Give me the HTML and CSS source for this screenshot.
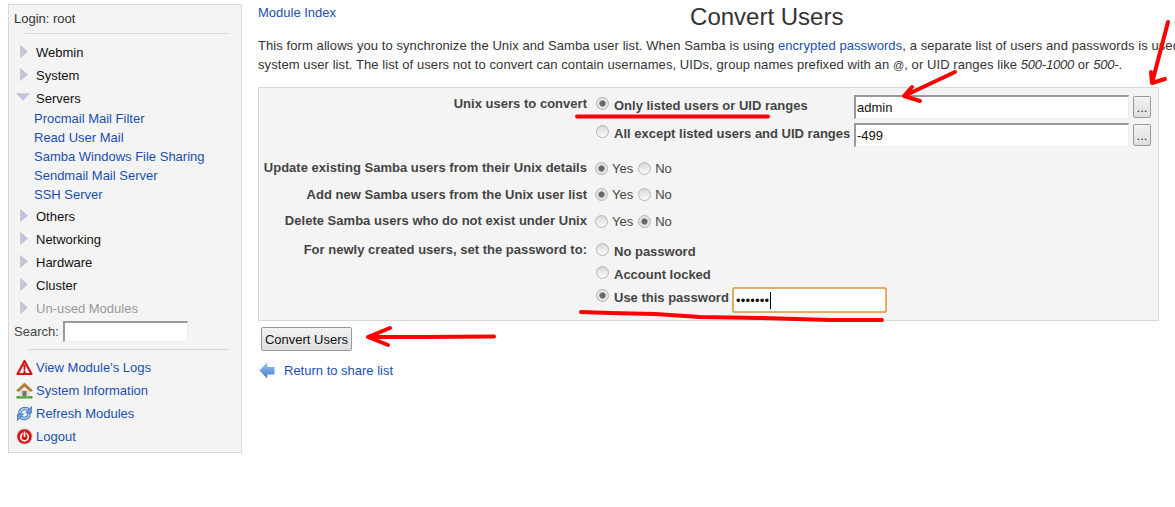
FILE: index.html
```html
<!DOCTYPE html>
<html lang="en">

<head>
    <meta charset="UTF-8">
    <title>Convert Users</title>
    <link rel="stylesheet" href="styles.css">
</head>

<body>
    <div class="page">
        <div class="side">
            <div class="login">Login: root</div>
            <hr class="rule-top">
            <ul class="cats">
                <li class="cat"><svg class="tri" viewBox="0 0 8 13"><path d="M0.5 0.5L7.5 6.5L0.5 12.5Z"/></svg>Webmin</li>
                <li class="cat"><svg class="tri" viewBox="0 0 8 13"><path d="M0.5 0.5L7.5 6.5L0.5 12.5Z"/></svg>System</li>
                <li class="cat"><svg class="tri-down" viewBox="0 0 14 8"><path d="M0.5 0.5H13.5L7 7.5Z"/></svg>Servers</li>
                <li>
                    <ul class="subs">
                        <li class="sub"><a href="#">Procmail Mail Filter</a></li>
                        <li class="sub"><a href="#">Read User Mail</a></li>
                        <li class="sub"><a href="#">Samba Windows File Sharing</a></li>
                        <li class="sub"><a href="#">Sendmail Mail Server</a></li>
                        <li class="sub"><a href="#">SSH Server</a></li>
                    </ul>
                </li>
                <li class="cat"><svg class="tri" viewBox="0 0 8 13"><path d="M0.5 0.5L7.5 6.5L0.5 12.5Z"/></svg>Others</li>
                <li class="cat"><svg class="tri" viewBox="0 0 8 13"><path d="M0.5 0.5L7.5 6.5L0.5 12.5Z"/></svg>Networking</li>
                <li class="cat"><svg class="tri" viewBox="0 0 8 13"><path d="M0.5 0.5L7.5 6.5L0.5 12.5Z"/></svg>Hardware</li>
                <li class="cat"><svg class="tri" viewBox="0 0 8 13"><path d="M0.5 0.5L7.5 6.5L0.5 12.5Z"/></svg>Cluster</li>
                <li class="cat unused"><svg class="tri" viewBox="0 0 8 13"><path d="M0.5 0.5L7.5 6.5L0.5 12.5Z"/></svg>Un-used Modules</li>
            </ul>
            <div class="search">Search: <input class="search-box" type="text"></div>
            <hr class="rule-bottom">
            <ul class="tools">
                <li>
                    <svg class="ico" viewBox="0 0 17 17"><path d="M8.500 2L15.500 15H1.500Z" fill="#f6f0f0" stroke="#d01515" stroke-width="2.200" stroke-linejoin="round"/><path d="M7.300 5.500H9.700L9.100 11.500H7.900Z" fill="#c01212"/><rect x="7.500" y="12" width="2" height="2" fill="#c01212"/></svg>
                    <a href="#">View Module's Logs</a>
                </li>
                <li>
                    <svg class="ico" viewBox="0 0 17 17"><path d="M0.500 14H16.500V16.500H0.500Z" fill="#4f9e3c"/><path d="M3.500 8H13.500V14.500H3.500Z" fill="#e8dcc4"/><path d="M0.500 8.500L8.500 1L16.500 8.500L14.500 9.500L8.500 4.500L2.500 9.500Z" fill="#bd7c34" stroke="#94601f" stroke-width="0.500"/><path d="M6.500 9H10.500V14.500H6.500Z" fill="#737373"/></svg>
                    <a href="#">System Information</a>
                </li>
                <li>
                    <svg class="ico" viewBox="0 0 17 17">
                        <g fill="none" stroke-linecap="round">
                            <path d="M4 7.500C4.500 3.500 10 2 13.500 5.500" stroke="#3f78bd" stroke-width="3.400"/>
                            <path d="M4 7.500C4.500 3.500 10 2 13.500 5.500" stroke="#b4cfec" stroke-width="1.600"/>
                            <path d="M13 9.500C12.500 13.500 7 15 3.500 11.500" stroke="#3f78bd" stroke-width="3.400"/>
                            <path d="M13 9.500C12.500 13.500 7 15 3.500 11.500" stroke="#b4cfec" stroke-width="1.600"/>
                        </g>
                        <path d="M15.500 1.500V8H9.500Z" fill="#6b9bd4" stroke="#3f78bd" stroke-width="0.800"/>
                        <path d="M1.500 15.500V9H7.500Z" fill="#6b9bd4" stroke="#3f78bd" stroke-width="0.800"/>
                    </svg>
                    <a href="#">Refresh Modules</a>
                </li>
                <li>
                    <svg class="ico" viewBox="0 0 17 17"><circle cx="8.500" cy="8.500" r="8" fill="#d9a0a0"/><circle cx="8.500" cy="8.500" r="7" fill="#d01010"/><circle cx="8.500" cy="9" r="3.800" fill="none" stroke="#fbeeee" stroke-width="1.800"/><rect x="6.800" y="3" width="3.400" height="6" fill="#d01010"/><rect x="7.600" y="3.500" width="1.800" height="5.500" fill="#fbeeee"/></svg>
                    <a href="#">Logout</a>
                </li>
            </ul>
        </div>

        <div class="main">
            <div class="head">
                <a class="index-link" href="#">Module Index</a>
                <h1 class="title">Convert Users</h1>
            </div>
            <p class="intro">This form allows you to synchronize the Unix and Samba user list. When Samba is using <a href="#">encrypted passwords</a>, a separate list of users and passwords is used<br>system user list. The list of users not to convert can contain usernames, UIDs, group names prefixed with an <span class="at">@</span>, or UID ranges like <i>500-1000</i> or <i>500-</i>.</p>

            <form class="box">
                <div class="row row-users">
                    <div class="lab">Unix users to convert</div>
                    <div class="val">
                        <div class="line">
                            <input class="rad" type="radio" name="m" checked>
                            <b class="opt opt-list">Only listed users or UID ranges</b>
                            <input class="txt" type="text" value="admin">
                            <button class="dots" type="button">...</button>
                        </div>
                        <div class="line">
                            <input class="rad" type="radio" name="m">
                            <b class="opt opt-list">All except listed users and UID ranges</b>
                            <input class="txt" type="text" value="-499">
                            <button class="dots" type="button">...</button>
                        </div>
                    </div>
                </div>
                <div class="row row-yn">
                    <div class="lab">Update existing Samba users from their Unix details</div>
                    <div class="val yn">
                        <input class="rad" type="radio" name="u" checked><span>Yes</span>
                        <input class="rad" type="radio" name="u"><span>No</span>
                    </div>
                </div>
                <div class="row row-yn">
                    <div class="lab">Add new Samba users from the Unix user list</div>
                    <div class="val yn">
                        <input class="rad" type="radio" name="a" checked><span>Yes</span>
                        <input class="rad" type="radio" name="a"><span>No</span>
                    </div>
                </div>
                <div class="row row-yn">
                    <div class="lab">Delete Samba users who do not exist under Unix</div>
                    <div class="val yn">
                        <input class="rad" type="radio" name="d"><span>Yes</span>
                        <input class="rad" type="radio" name="d" checked><span>No</span>
                    </div>
                </div>
                <div class="row row-pass">
                    <div class="lab">For newly created users, set the password to:</div>
                    <div class="val">
                        <div class="pline"><input class="rad" type="radio" name="p"><b class="opt">No password</b></div>
                        <div class="pline"><input class="rad" type="radio" name="p"><b class="opt">Account locked</b></div>
                        <div class="pline">
                            <input class="rad" type="radio" name="p" checked><b class="opt">Use this password</b>
                            <div class="pass"><span class="pass-dots">•••••••</span><span class="caret"></span></div>
                        </div>
                    </div>
                </div>
            </form>

            <button class="submit" type="button">Convert Users</button>

            <div class="back">
                <svg class="back-ico" viewBox="0 0 16 17"><defs><linearGradient id="bk" x1="0" y1="0" x2="0" y2="1"><stop offset="0" stop-color="#a4c4ee"/><stop offset="1" stop-color="#3a78d2"/></linearGradient></defs><path d="M0.500 8.500L8 0.500L8.500 5H15.500V12.500H8.500L8 16.500Z" fill="url(#bk)"/></svg>
                <a href="#">Return to share list</a>
            </div>
        </div>
    </div>

    <!-- red marks drawn over the screenshot -->
    <svg class="marks" viewBox="0 0 1175 507">
        <g fill="none" stroke="#ff0000" stroke-width="4" stroke-linecap="round" stroke-linejoin="round">
            <path d="M577 116.500H768"/>
            <path d="M955 72L904 96M912 87L904 96L920 101"/>
            <path d="M1168 22L1152 83M1151 72L1152 83L1165 79"/>
            <path d="M581 312L610 313L655 314L700 317L760 318L830 320L882 320"/>
            <path d="M494 336.500L420 337L368 337M390 328L368 337L388 345"/>
        </g>
    </svg>
</body>

</html>
```

FILE: styles.css
```css
* {
    box-sizing: border-box;
}

html,
body {
    margin: 0;
    padding: 0;
    height: 507px;
    overflow: hidden;
    background: #fff;
}

body {
    font-family: "Liberation Sans", Arial, sans-serif;
    font-size: 13px;
    color: #333;
    position: relative;
}

a {
    color: #1a4fb0;
    text-decoration: none;
}

ul {
    list-style: none;
    margin: 0;
    padding: 0;
}

.page {
    display: flex;
    align-items: flex-start;
    padding: 4px 0 0 8px;
    width: 1400px;
}

/* left menu */

.side {
    width: 234px;
    height: 449px;
    flex: none;
    background: #f4f4f4;
    border: 1px solid #d8d8d8;
    padding: 6px 5px 0 5px;
}

.login {
    line-height: 16px;
}

.rule-top {
    border: 0;
    border-top: 1px solid #d8d8d8;
    margin: 6px 7px 0 11px;
}

.cats {
    margin-top: 7px;
}

.cat {
    height: 23px;
    line-height: 23px;
    color: #111;
    padding-left: 22px;
    position: relative;
}

.cat.unused {
    color: #999;
}

.tri {
    position: absolute;
    left: 6px;
    top: 4px;
    width: 8px;
    height: 13px;
    fill: #c0c4dc;
    stroke: #b4b4c8;
    stroke-width: 0.5;
}

.tri-down {
    position: absolute;
    left: 2px;
    top: 6px;
    width: 14px;
    height: 8px;
    fill: #c0c4dc;
    stroke: #c4c4d4;
    stroke-width: 0.5;
}

.subs {
    margin: -1px 0 1px 0;
}

.sub {
    height: 19px;
    line-height: 19px;
    padding-left: 20px;
}

.search {
    display: flex;
    align-items: center;
    gap: 4px;
    height: 23px;
    color: #444;
}

.search-box {
    width: 125px;
    height: 21px;
    margin: 0;
    background: #fff;
    border: 1px solid #ececec;
    border-top: 2px solid #999;
    border-left: 2px solid #999;
}

.rule-bottom {
    border: 0;
    border-top: 1px solid #d8d8d8;
    margin: 6px 7px 0 15px;
}

.tools {
    margin-top: 6px;
}

.tools li {
    display: flex;
    align-items: center;
    gap: 3px;
    height: 23px;
    padding-left: 2px;
}

.ico {
    width: 17px;
    height: 17px;
    flex: none;
}

/* right side */

.main {
    margin-left: 16px;
    width: 1000px;
    flex: none;
}

.head {
    display: flex;
    height: 29px;
}

.index-link {
    line-height: 18px;
}

.title {
    margin: 0 0 0 354px;
    font-size: 24px;
    font-weight: normal;
    line-height: 26px;
    color: #333;
}

.intro {
    margin: 3px 0 0 0;
    line-height: 19px;
    white-space: nowrap;
    letter-spacing: 0.08px;
}

.intro i {
    letter-spacing: -0.2px;
}

.at {
    font-size: 11px;
    line-height: 1;
}

.box {
    width: 901px;
    height: 234px;
    margin-top: 13px;
    background: #f4f4f4;
    border: 1px solid #d8d8d8;
    padding-top: 5px;
}

.row {
    display: flex;
}

.lab {
    width: 328px;
    flex: none;
    text-align: right;
    font-weight: bold;
    color: #444;
    line-height: 16px;
    letter-spacing: 0.02px;
}

.val {
    margin-left: 9px;
}

.rad {
    appearance: none;
    width: 13px;
    height: 13px;
    margin: 0;
    flex: none;
    border-radius: 50%;
    background: linear-gradient(#d8d8d8, #fcfcfc);
    border: 1px solid #b4b4b4;
}

.rad:checked {
    background: radial-gradient(circle, #666 0, #666 2.5px, #ddd 3.5px, #f2f2f2 100%);
}

.opt {
    color: #444;
    white-space: nowrap;
}

.line {
    display: flex;
    align-items: center;
    height: 28px;
}

.line .rad {
    margin-top: -7px;
}

.opt-list {
    width: 240px;
    margin: -4px 0 0 5px;
}

.txt {
    width: 275px;
    height: 24px;
    margin: 0;
    padding: 2px 1px;
    font: 13px "Liberation Sans", Arial, sans-serif;
    color: #111;
    background: #fff;
    border: 1px solid #ececec;
    border-top: 2px solid #999;
    border-left: 2px solid #999;
}

.dots {
    width: 18px;
    height: 22px;
    margin: 0 0 0 4px;
    padding: 0;
    font: 13px "Liberation Sans", Arial, sans-serif;
    color: #333;
    background: linear-gradient(#f2f2f2, #dedede);
    border: 1px solid #999;
    border-radius: 2px;
}

.row-users {
    height: 67px;
}

.row-users .lab {
    padding-top: 4px;
    line-height: 14px;
}

.row-yn {
    height: 26.5px;
}

.yn {
    display: flex;
    align-items: center;
    height: 16px;
    margin-left: 8px;
}

.yn span {
    margin: 0 5px 0 4px;
    color: #444;
}

.row-pass .lab {
    margin-top: 2px;
}

.pline {
    display: flex;
    align-items: center;
    gap: 5px;
    height: 23px;
}

.pline .rad {
    margin-top: -3px;
}

.pass {
    width: 155px;
    height: 26px;
    margin: 6px 0 0 -2px;
    display: flex;
    align-items: center;
    padding-left: 2px;
    background: #fff;
    border: 2px solid #e0b060;
    border-radius: 2px;
    color: #111;
}

.pass-dots {
    font-size: 13px;
    letter-spacing: 0.2px;
}

.caret {
    width: 1px;
    height: 17px;
    background: #000;
    margin-left: 1px;
}

.submit {
    display: block;
    width: 91px;
    height: 24px;
    margin: 6px 0 0 3px;
    padding: 0;
    font: 13px "Liberation Sans", Arial, sans-serif;
    color: #111;
    background: linear-gradient(#f2f2f2, #dedede);
    border: 1px solid #999;
    border-radius: 2px;
}

.back {
    display: flex;
    align-items: center;
    gap: 9px;
    height: 18px;
    margin-top: 10px;
    padding-left: 1px;
}

.back-ico {
    width: 16px;
    height: 17px;
}

.marks {
    position: absolute;
    left: 0;
    top: 0;
    width: 1175px;
    height: 507px;
    pointer-events: none;
}
```
